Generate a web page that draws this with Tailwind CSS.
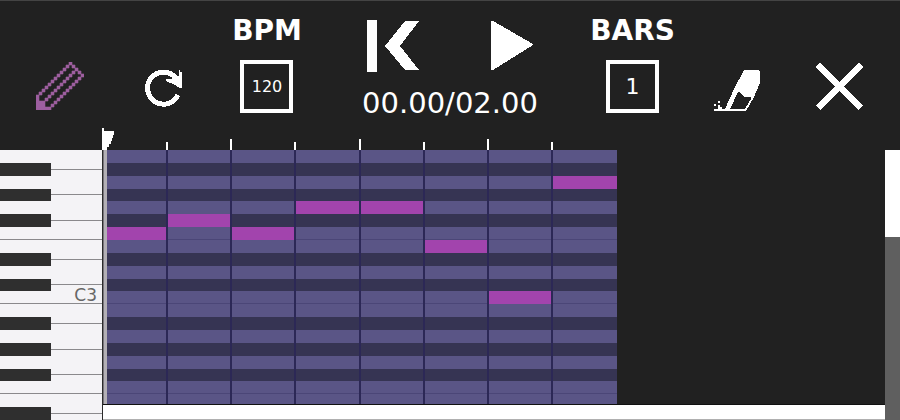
<!DOCTYPE html>
<html lang="en">
<head>
    <meta charset="UTF-8">
    <meta name="viewport" content="width=device-width, initial-scale=1.0">
    <title>Piano Roll</title>
    <script src="https://cdn.jsdelivr.net/npm/@tailwindcss/browser@4"></script>
</head>

<body class="h-screen overflow-hidden bg-[#212121] text-white font-['DejaVu_Sans',sans-serif]">
    <div class="flex flex-col h-full border-t border-[#444444]">

        <!-- =============================================================== -->
        <!-- TOOLBAR -->
        <!-- =============================================================== -->
        <header class="h-[125px] shrink-0 pr-[3px] grid grid-cols-[120fr_86fr_122fr_244fr_121fr_88fr_116fr] justify-items-center">

            <!-- Draw tool (active) -->
            <button class="mt-[61px] self-start text-[#9d5fa0]" aria-label="Draw" aria-pressed="true">
                <svg class="block w-[48px] h-[48px]" viewBox="0 0 16 16" fill="currentColor" stroke="currentColor" stroke-width="0.2">
                    <path d="M11 0h1v1h-1zm-1 1h1v1h-1zm-1 1h1v1h-1zm-1 1h1v1h-1zm-1 1h1v1h-1zm-1 1h1v1h-1zm-1 1h1v1h-1zm-1 1h1v1h-1zm-1 1h1v1h-1zm-1 1h1v1h-1zm-1 1h1v1h-1z"/>
                    <path d="M12 1h1v1h-1zm1 1h1v1h-1zm1 1h1v1h-1zm1 1h1v1h-1zm-1 1h1v1h-1zm-1 1h1v1h-1zm-1 1h1v1h-1zm-1 1h1v1h-1zm-1 1h1v1h-1zm-1 1h1v1h-1zm-1 1h1v1h-1zm-1 1h1v1h-1zm-1 1h1v1h-1zm-1 1h1v1h-1z"/>
                    <path d="M12 3h1v1h-1zm-1 1h1v1h-1zm-1 1h1v1h-1zm-1 1h1v1h-1zm-1 1h1v1h-1zm-1 1h1v1h-1zm-1 1h1v1h-1zm-1 1h1v1h-1zm-1 1h1v1h-1zm-1 1h1v1h-1z"/>
                    <path d="M0 11h1v2h2v2h2v1h-5z"/>
                </svg>
            </button>

            <!-- Redo -->
            <button class="mt-[67px] self-start" aria-label="Redo">
                <svg class="block w-[38px] h-[40px]" viewBox="0 0 38 40" shape-rendering="crispEdges">
                    <path d="M34 27A16 16 0 1 1 31 9" fill="none" stroke="currentColor" stroke-width="5"/>
                    <path d="M35 2h1v2h2v16h-2l-5-3-9-4v-2h6l3-4 4 1z" fill="currentColor"/>
                </svg>
            </button>

            <!-- Tempo -->
            <div class="flex flex-col items-center pt-[13px]">
                <label for="bpm" class="text-[28px] leading-[34px] font-bold">BPM</label>
                <input id="bpm" type="text" inputmode="numeric" value="120"
                    class="mt-[12px] w-[53px] h-[53px] border-4 border-white bg-transparent text-center text-[16px] leading-[20px] outline-none">
            </div>

            <!-- Transport -->
            <div class="flex flex-col items-center pt-[19px]">
                <div class="flex items-start gap-[72px]">
                    <button aria-label="Back to start">
                        <svg class="block w-[52px] h-[52px]" viewBox="0 0 52 52" fill="currentColor" shape-rendering="crispEdges">
                            <path d="M0 0h10v52H0zM38 1h14L33 26l19 24H38L18 26z"/>
                        </svg>
                    </button>
                    <button aria-label="Play">
                        <svg class="block w-[42px] h-[52px]" viewBox="0 0 42 52" fill="currentColor" shape-rendering="crispEdges">
                            <path d="M0 1h2l40 23v1L2 50H0z"/>
                        </svg>
                    </button>
                </div>
                <output class="mt-[14px] text-[29px] leading-[34px]">00.00/02.00</output>
            </div>

            <!-- Length -->
            <div class="flex flex-col items-center pt-[13px]">
                <label for="bars" class="text-[28px] leading-[34px] font-bold">BARS</label>
                <input id="bars" type="text" inputmode="numeric" value="1"
                    class="mt-[12px] w-[53px] h-[53px] border-4 border-white bg-transparent text-center text-[22px] leading-[26px] outline-none">
            </div>

            <!-- Erase -->
            <button class="mt-[69px] self-start" aria-label="Erase">
                <svg class="block w-[46px] h-[42px]" viewBox="0 0 46 42" fill="currentColor" fill-rule="evenodd" shape-rendering="crispEdges">
                    <path d="M30 0h14l2 2v11L40 27 32 41H0v-2h11l9-20zM24 22h2l2 3 3 2h6v2l-6 10H16z"/>
                    <path d="M4 31h2v2H4zM0 34h2v2H0zM4 35h2v2h2v2H4z"/>
                </svg>
            </button>

            <!-- Close -->
            <button class="mt-[61px] self-start" aria-label="Close">
                <svg class="block w-[49px] h-[49px]" viewBox="0 0 49 49" shape-rendering="crispEdges">
                    <path d="M3 3l43 43M46 3L3 46" stroke="currentColor" stroke-width="7"/>
                </svg>
            </button>
        </header>

        <!-- =============================================================== -->
        <!-- RULER -->
        <!-- =============================================================== -->
        <div class="h-[24px] shrink-0 flex pr-[15px]">
            <div class="w-[102px] shrink-0"></div>
            <div class="relative flex-1 pl-[2px]">
                <div id="ruler" class="w-[65.7%] h-full grid grid-cols-8 items-end"></div>
                <!-- Playhead handle -->
                <svg class="absolute left-0 top-[2px] w-[12px] h-[22px]" viewBox="0 0 12 22" fill="currentColor" shape-rendering="crispEdges">
                    <path d="M0 0h2v3h10v4h-1v3h-1v3H9v3H7v3H5v3H0z"/>
                </svg>
            </div>
        </div>

        <!-- =============================================================== -->
        <!-- KEYBOARD + NOTE GRID -->
        <!-- =============================================================== -->
        <main class="flex-1 min-h-0 flex">
            <div id="keys" class="w-[103px] shrink-0 grid grid-rows-[repeat(21,minmax(0,1fr))] grid-cols-[51px_1fr] bg-[#f4f3f6] border-r border-[#2b2b2b]"></div>

            <div class="flex-1 min-w-0 flex flex-col">
                <div class="relative flex-1 min-h-0 overflow-hidden pl-px">
                    <div id="roll" class="w-[65.7%] h-[270px] grid grid-rows-[repeat(21,minmax(0,1fr))] grid-cols-8"></div>
                    <!-- Playhead -->
                    <div class="absolute inset-y-0 left-0 w-[4px] bg-[#b3b0b5] border-l border-[#77747a]"></div>
                </div>
                <!-- Horizontal scrollbar -->
                <div class="h-[16px] shrink-0 bg-white border-t border-b border-t-[#111111] border-b-[#b0b0b0]"></div>
            </div>

            <!-- Vertical scrollbar -->
            <div class="w-[15px] shrink-0 bg-[#5f5f5f]">
                <div class="h-[87px] bg-white"></div>
            </div>
        </main>
    </div>

    <script>
    const ROWS = 21;
    const STEPS = 8;
    const SHARPS = [1, 3, 5, 8, 10, 13, 15, 17, 20];
    const OCTAVE_ROW = 11; // C3

    // One entry per step: the row the note sits on
    const NOTES = [6, 5, 6, 4, 4, 7, 11, 2];

    function add(parent, className, row, col) {
        const el = document.createElement('div');
        el.className = className;
        if (row) el.style.gridRow = row;
        if (col) el.style.gridColumn = col;
        parent.appendChild(el);
        return el;
    }

    // Ruler ticks, taller on every second step
    const ruler = document.getElementById('ruler');
    for (let i = 1; i < STEPS; i++) {
        add(ruler, i % 2 ? 'w-[2px] h-[8px] bg-white justify-self-end' : 'w-[2px] h-[11px] bg-white justify-self-end');
    }

    const keys = document.getElementById('keys');
    const roll = document.getElementById('roll');
    for (let r = 0; r < ROWS; r++) {
        const line = `${r + 1}`;
        if (SHARPS.includes(r)) {
            add(keys, 'bg-[#2f2f2f]', line, '1');
            add(keys, 'self-center h-px bg-[#8a898c]', line, '2');
            add(roll, 'bg-[#363453]', line, '1 / -1');
        } else {
            // Two white keys next to each other get a line between them
            const joined = r + 1 < ROWS && !SHARPS.includes(r + 1);
            add(keys, joined ? 'border-b border-[#8a898c]' : '', line, '1 / -1');
            add(roll, joined ? 'bg-[#5a5586] border-b border-[#4b4677]' : 'bg-[#5a5586]', line, '1 / -1');
        }
    }

    const label = add(keys, 'self-end pr-[5px] text-right text-[17px] leading-none text-[#666666]', `${OCTAVE_ROW + 1}`, '2');
    label.textContent = 'C3';

    NOTES.forEach((row, step) => add(roll, 'bg-[#a244ad]', `${row + 1}`, `${step + 1}`));
    for (let s = 1; s < STEPS; s++) {
        add(roll, 'border-r-2 border-[#2c2856]', '1 / -1', `${s}`);
    }
    </script>
</body>
</html>
